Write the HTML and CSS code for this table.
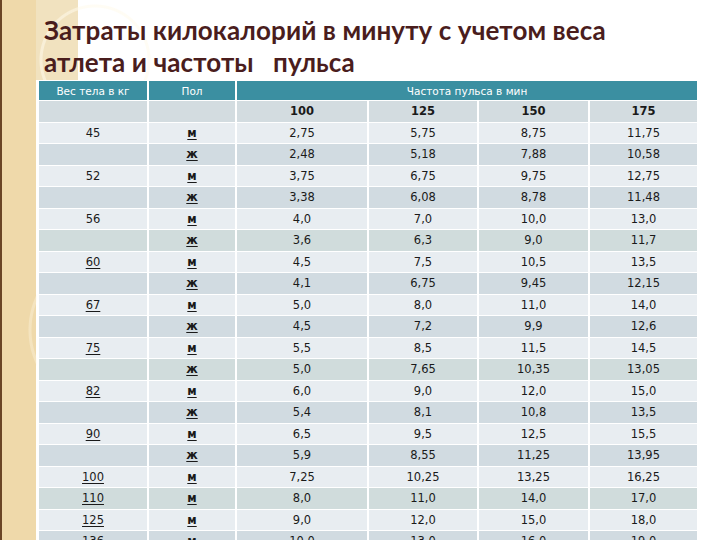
FILE: index.html
```html
<!DOCTYPE html>
<html lang="ru">
<head>
<meta charset="utf-8">
<title>Затраты килокалорий</title>
<link rel="stylesheet" href="styles.css">
</head>
<body>
<div class="slide">
  <h1 class="title">Затраты килокалорий в минуту с учетом веса<br>атлета и частоты&nbsp;&nbsp; пульса</h1>
  <table class="grid">
    <colgroup>
      <col class="c1"><col class="c2"><col class="c3"><col class="c4"><col class="c5"><col class="c6">
    </colgroup>
    <tr class="head">
      <th>Вес тела в кг</th><th>Пол</th><th colspan="4">Частота пульса в мин</th>
    </tr>
    <tr class="sub">
      <td></td><td></td><td>100</td><td>125</td><td>150</td><td>175</td>
    </tr>
    <tr class="odd"><td>45</td><td><u>м</u></td><td>2,75</td><td>5,75</td><td>8,75</td><td>11,75</td></tr>
    <tr class="even"><td></td><td><u>ж</u></td><td>2,48</td><td>5,18</td><td>7,88</td><td>10,58</td></tr>
    <tr class="odd"><td>52</td><td><u>м</u></td><td>3,75</td><td>6,75</td><td>9,75</td><td>12,75</td></tr>
    <tr class="even"><td></td><td><u>ж</u></td><td>3,38</td><td>6,08</td><td>8,78</td><td>11,48</td></tr>
    <tr class="odd"><td>56</td><td><u>м</u></td><td>4,0</td><td>7,0</td><td>10,0</td><td>13,0</td></tr>
    <tr class="even alt"><td></td><td><u>ж</u></td><td>3,6</td><td>6,3</td><td>9,0</td><td>11,7</td></tr>
    <tr class="odd"><td><u>60</u></td><td><u>м</u></td><td>4,5</td><td>7,5</td><td>10,5</td><td>13,5</td></tr>
    <tr class="even"><td></td><td><u>ж</u></td><td>4,1</td><td>6,75</td><td>9,45</td><td>12,15</td></tr>
    <tr class="odd"><td><u>67</u></td><td><u>м</u></td><td>5,0</td><td>8,0</td><td>11,0</td><td>14,0</td></tr>
    <tr class="even"><td></td><td><u>ж</u></td><td>4,5</td><td>7,2</td><td>9,9</td><td>12,6</td></tr>
    <tr class="odd"><td><u>75</u></td><td><u>м</u></td><td>5,5</td><td>8,5</td><td>11,5</td><td>14,5</td></tr>
    <tr class="even alt"><td></td><td><u>ж</u></td><td>5,0</td><td>7,65</td><td>10,35</td><td>13,05</td></tr>
    <tr class="odd"><td><u>82</u></td><td><u>м</u></td><td>6,0</td><td>9,0</td><td>12,0</td><td>15,0</td></tr>
    <tr class="even"><td></td><td><u>ж</u></td><td>5,4</td><td>8,1</td><td>10,8</td><td>13,5</td></tr>
    <tr class="odd"><td><u>90</u></td><td><u>м</u></td><td>6,5</td><td>9,5</td><td>12,5</td><td>15,5</td></tr>
    <tr class="even"><td></td><td><u>ж</u></td><td>5,9</td><td>8,55</td><td>11,25</td><td>13,95</td></tr>
    <tr class="odd"><td><u>100</u></td><td><u>м</u></td><td>7,25</td><td>10,25</td><td>13,25</td><td>16,25</td></tr>
    <tr class="even alt"><td><u>110</u></td><td><u>м</u></td><td>8,0</td><td>11,0</td><td>14,0</td><td>17,0</td></tr>
    <tr class="odd"><td><u>125</u></td><td><u>м</u></td><td>9,0</td><td>12,0</td><td>15,0</td><td>18,0</td></tr>
    <tr class="even"><td><u>136</u></td><td><u>м</u></td><td>10,0</td><td>13,0</td><td>16,0</td><td>19,0</td></tr>
  </table>
</div>
</body>
</html>
```
FILE: styles.css
```css
html, body {
  margin: 0;
  padding: 0;
}
body {
  width: 720px;
  height: 540px;
  overflow: hidden;
  background:
    linear-gradient(to right, #6a4526 0, #6a4526 2px, transparent 2px),
    radial-gradient(circle at 95px 60px, transparent 0, transparent 52px, rgba(255,250,235,0.55) 53px, rgba(255,250,235,0.55) 55px, transparent 56px),
    radial-gradient(circle at 110px 330px, transparent 0, transparent 78px, rgba(255,248,230,0.35) 79px, rgba(255,248,230,0.35) 81px, transparent 82px),
    linear-gradient(#f1e2bf, #f1e2bf) 36px 0 / 42px 80px no-repeat,
    linear-gradient(to right, #efd9aa 0, #efd9aa 36px, #ffffff 36px);
  font-family: "DejaVu Sans", Verdana, sans-serif;
}
.slide {
  padding: 14px 0 0 37px;
}
.title {
  margin: 0 0 0 7px;
  font-family: Lato, "Open Sans", sans-serif;
  font-weight: 700;
  font-size: 26px;
  line-height: 32px;
  color: #4a1d1d;
  letter-spacing: 0.1px;
  height: 66px;
}
.grid {
  border-collapse: collapse;
  table-layout: fixed;
  width: 660px;
  font-size: 11.5px;
  color: #1a1a1a;
}
.c1 { width: 110px; }
.c2 { width: 88px; }
.c3 { width: 132px; }
.c4 { width: 110px; }
.c5 { width: 111px; }
.c6 { width: 109px; }
.grid th, .grid td {
  border: 2px solid #ffffff;
  border-top-width: 1px;
  border-bottom-width: 1px;
  padding: 0;
  text-align: center;
  vertical-align: middle;
  height: 20.5px;
  white-space: nowrap;
}
.grid th {
  background: #3b8fa1;
  color: #ffffff;
  font-weight: normal;
  font-size: 10.5px;
  height: 19px;
}
.sub td {
  background: #d3dce0;
  font-weight: bold;
}
.odd td { background: #e8edf1; }
.even td { background: #d1dbe1; }
.even.alt td { background: #d0dcdc; }
.grid u {
  text-decoration-thickness: 1px;
  text-underline-offset: 2px;
}
.grid td:nth-child(2) u {
  font-weight: bold;
}
```
